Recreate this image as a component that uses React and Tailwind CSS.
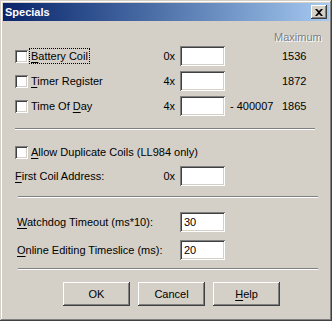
import React from 'react';

const sunken =
  'bg-white shadow-[inset_1px_1px_#808080,inset_-1px_-1px_#ffffff,inset_2px_2px_#404040,inset_-2px_-2px_#d4d0c8]';
const raised =
  'bg-[#d4d0c8] shadow-[inset_-1px_-1px_#404040,inset_1px_1px_#ffffff,inset_-2px_-2px_#808080,inset_2px_2px_#d4d0c8]';

const Checkbox = () => <div className={`w-[13px] h-[13px] shrink-0 ${sunken}`} />;

const Field = ({ value }) => (
  <div className={`w-[45px] h-[20px] shrink-0 pl-[4px] flex items-center ${sunken}`}>{value}</div>
);

const Sep = ({ className }) => (
  <div className={`h-[2px] border-t border-t-[#808080] border-b border-b-white ${className}`} />
);

const U = ({ children }) => <span className="underline underline-offset-[2px]">{children}</span>;

const CoilRow = ({ label, prefix, suffix, max, focused, className }) => (
  <div className={`flex items-center h-[20px] ${className}`}>
    <div className="flex items-center w-[148px]">
      <Checkbox />
      <div className={`ml-[1px] px-[1px] leading-[14px] ${focused ? 'border border-dotted border-black' : 'border border-transparent'}`}>
        {label}
      </div>
    </div>
    <div className="w-[17px] pr-[5px] text-right">{prefix}</div>
    <Field />
    <div className="w-[57px] pl-[5px]">{suffix}</div>
    <div className="w-[30px]">{max}</div>
  </div>
);

const Button = ({ children }) => (
  <div className={`w-[67px] h-[24px] flex items-center justify-center ${raised}`}>{children}</div>
);

export default function App() {
  return (
    <div className="w-[332px] h-[321px] bg-[#d4d0c8] p-[3px] text-black text-[11px] font-['Liberation_Sans',Arial,sans-serif] shadow-[inset_-1px_-1px_#404040,inset_1px_1px_#d4d0c8,inset_-2px_-2px_#808080,inset_2px_2px_#ffffff] overflow-hidden">
      <div className="h-[18px] flex items-center justify-between pl-[2px] pr-[2px] bg-gradient-to-r from-[#0a246a] to-[#a6caf0]">
        <span className="text-white font-bold text-[11px]">Specials</span>
        <div className={`w-[16px] h-[14px] flex items-center justify-center ${raised}`}>
          <svg width="8" height="7" viewBox="0 0 8 7">
            <path d="M0 0h2l2 2 2-2h2L5 3.5 8 7H6L4 5 2 7H0l3-3.5z" fill="#000" />
          </svg>
        </div>
      </div>

      <div className="pl-[12px] flex flex-col">
        <div className="h-[13px] mt-[10px] pl-[259px] leading-[13px] text-[#808080] [text-shadow:1px_1px_0_#ffffff]">
          Maximum
        </div>
        <CoilRow className="mt-[2px]" focused label={<><U>B</U>attery Coil</>} prefix="0x" max="1536" />
        <CoilRow className="mt-[5px]" label={<><U>T</U>imer Register</>} prefix="4x" max="1872" />
        <CoilRow className="mt-[5px]" label={<>Time Of <U>D</U>ay</>} prefix="4x" suffix="- 400007" max="1865" />

        <Sep className="mt-[12px] w-[300px]" />

        <div className="flex items-center h-[20px] mt-[12px]">
          <Checkbox />
          <span className="ml-[3px]"><U>A</U>llow Duplicate Coils (LL984 only)</span>
        </div>
        <div className="flex items-center h-[20px] mt-[4px]">
          <div className="w-[148px]"><U>F</U>irst Coil Address:</div>
          <div className="w-[17px] pr-[5px] text-right">0x</div>
          <Field />
        </div>

        <Sep className="mt-[10px] ml-[3px] w-[300px]" />

        <div className="flex items-center h-[20px] mt-[14px] pl-[2px]">
          <div className="w-[163px]"><U>W</U>atchdog Timeout (ms*10):</div>
          <Field value="30" />
        </div>
        <div className="flex items-center h-[20px] mt-[8px] pl-[2px]">
          <div className="w-[163px]"><U>O</U>nline Editing Timeslice (ms):</div>
          <Field value="20" />
        </div>

        <Sep className="mt-[8px] ml-[3px] w-[300px]" />

        <div className="flex gap-[8px] mt-[12px] pl-[48px]">
          <Button>OK</Button>
          <Button>Cancel</Button>
          <Button><span><U>H</U>elp</span></Button>
        </div>
      </div>
    </div>
  );
}
